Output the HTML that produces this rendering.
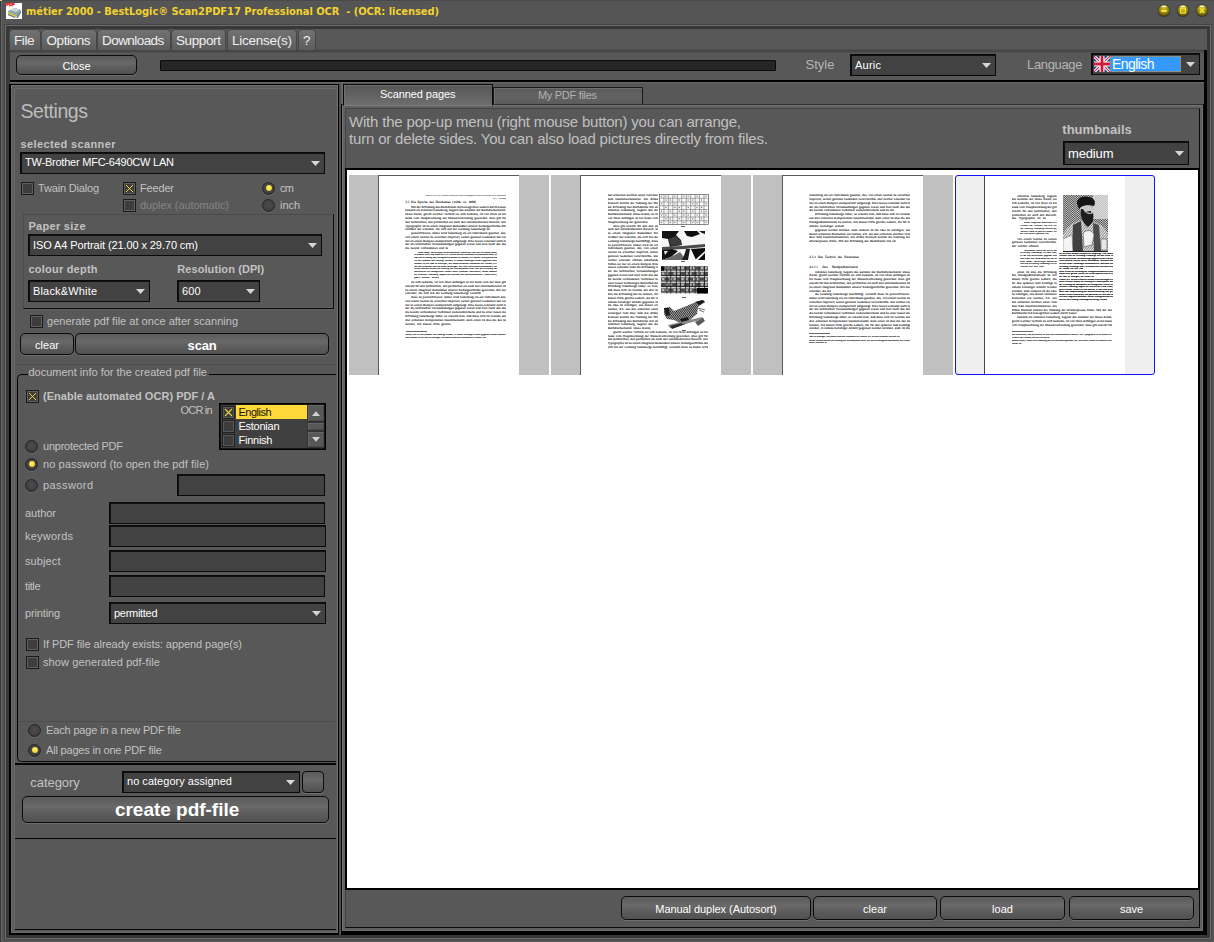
<!DOCTYPE html>
<html lang="en"><head><meta charset="utf-8"><title>métier 2000 - BestLogic Scan2PDF17 Professional OCR</title>
<style>
html,body{margin:0;padding:0;background:#555555;}
body{width:1214px;height:942px;overflow:hidden;font-family:"Liberation Sans",sans-serif;}
#win{position:relative;width:1214px;height:942px;overflow:hidden;background:#555555;}
#win div,#win span.t,#win svg{position:absolute;box-sizing:border-box;}
span.t{white-space:nowrap;line-height:normal;}
.pg{overflow:hidden;text-rendering:geometricPrecision;-webkit-text-stroke:0.085px currentColor;}
.pg div{overflow:hidden;}
.btn{border:1px solid #0c0c0c;border-radius:5px;background:linear-gradient(#5b5b5b 0%,#696969 40%,#5f5f5f 60%,#505050 100%);box-shadow:0 1px 0 #6e6e6e;}
.inp{background:#424242;border:1px solid #0a0a0a;box-shadow:inset 1px 1px 0 #101010;}
.cb{width:13px;height:13px;background:#3d3d3d;border:1px solid #1a1a1a;box-shadow:inset 0 0 0 1px #606060;}
.rb{width:13px;height:13px;border-radius:50%;background:radial-gradient(circle at 50% 45%,#4c4c4c 0%,#424242 55%,#2c2c2c 100%);border:1px solid #262626;box-shadow:0 1px 0 #6a6a6a;}
.mtab{top:30px;height:20px;border-radius:4px 4px 0 0;background:linear-gradient(#727272,#5c5c5c);box-shadow:0 0 0 1px #464646;}

</style></head>
<body>
<div id="win">
<div style="left:0px;top:0px;width:1px;height:942px;background:#3a3a3a;"></div>
<div style="left:1px;top:0px;width:1px;height:942px;background:#666666;"></div>
<div style="left:0px;top:0px;width:1214px;height:1px;background:#4a4a4a;"></div>
<div style="left:0px;top:0px;width:2px;height:1px;background:#e8c8a8;"></div>
<svg style="left:6px;top:3px" width="16" height="16" viewBox="0 0 16 16">
<rect width="16" height="16" fill="#ffffff"/>
<text x="0.3" y="3.4" font-family="Liberation Sans, sans-serif" font-weight="bold" font-size="4.2" fill="#f01010" stroke="#f01010" stroke-width="0.35">PDF</text>
<polygon points="2,8 9,5 15,7 15,9 12,15 8,14 2,11" fill="#8fa7a8"/>
<polygon points="4,7 9,5 14,7 10,9" fill="#c5d6d8"/>
<polygon points="2,9 11,13 11,14.5 2,10.5" fill="#d9cf3a"/>
<polygon points="2,11 9,14.2 9,15 2,12" fill="#3e5a58"/>
<polygon points="11,13 15,8 15,9.5 11.5,15" fill="#5f7f80"/>
</svg>
<span class="t" id="t1" style="left:26px;top:4.59px;font-size:11px;color:#f2d22e;font-weight:bold;font-family:'DejaVu Sans Condensed','DejaVu Sans',sans-serif;letter-spacing:-0.035px;white-space:pre;">métier 2000 - BestLogic® Scan2PDF17 Professional OCR  - (OCR: licensed)</span>
<svg style="left:1156.5px;top:3px" width="14" height="15" viewBox="0 0 14 15">
<defs><radialGradient id="g1163.5" cx="50%" cy="35%" r="65%"><stop offset="0" stop-color="#cdbb24"/><stop offset="0.55" stop-color="#9c8c12"/><stop offset="1" stop-color="#4e4506"/></radialGradient></defs>
<circle cx="7" cy="7.7" r="6.4" fill="#3a3a36"/>
<circle cx="7" cy="7.5" r="5.6" fill="url(#g1163.5)"/>
<ellipse cx="7" cy="3.4" rx="2.6" ry="0.9" fill="#fffbe0" opacity="0.95"/>
<rect x="3.9" y="6.9" width="6.2" height="1.9" rx="0.8" fill="#f8e53c"/></svg>
<svg style="left:1175.5px;top:3px" width="14" height="15" viewBox="0 0 14 15">
<defs><radialGradient id="g1182.5" cx="50%" cy="35%" r="65%"><stop offset="0" stop-color="#cdbb24"/><stop offset="0.55" stop-color="#9c8c12"/><stop offset="1" stop-color="#4e4506"/></radialGradient></defs>
<circle cx="7" cy="7.7" r="6.4" fill="#3a3a36"/>
<circle cx="7" cy="7.5" r="5.6" fill="url(#g1182.5)"/>
<ellipse cx="7" cy="3.4" rx="2.6" ry="0.9" fill="#fffbe0" opacity="0.95"/>
<rect x="4.6" y="5.2" width="4.8" height="4.8" fill="none" stroke="#f6e23a" stroke-width="1.2"/><rect x="6.5" y="7.1" width="1" height="1" fill="#f6e23a"/></svg>
<svg style="left:1194.5px;top:3px" width="14" height="15" viewBox="0 0 14 15">
<defs><radialGradient id="g1201.5" cx="50%" cy="35%" r="65%"><stop offset="0" stop-color="#cdbb24"/><stop offset="0.55" stop-color="#9c8c12"/><stop offset="1" stop-color="#4e4506"/></radialGradient></defs>
<circle cx="7" cy="7.7" r="6.4" fill="#3a3a36"/>
<circle cx="7" cy="7.5" r="5.6" fill="url(#g1201.5)"/>
<ellipse cx="7" cy="3.4" rx="2.6" ry="0.9" fill="#fffbe0" opacity="0.95"/>
<path d="M4.8 5.2 L9.2 10 M9.2 5.2 L4.8 10" stroke="#f6e23a" stroke-width="1.5" fill="none"/></svg>
<div style="left:4px;top:24px;width:1207px;height:915px;background:#444444;"></div>
<div style="left:5px;top:25px;width:1206px;height:914px;background:#6c6c6c;"></div>
<div style="left:6px;top:26px;width:1204px;height:912px;background:#383838;"></div>
<div style="left:1211px;top:24px;width:1px;height:916px;background:#494949;"></div>
<div style="left:4px;top:939px;width:1208px;height:1px;background:#494949;"></div>
<div style="left:10px;top:30px;width:1197px;height:905px;background:#000000;"></div>
<div style="left:10px;top:29px;width:1197px;height:21px;background:#585858;"></div>
<div style="left:10px;top:50px;width:1194px;height:30px;background:#585858;"></div>
<div style="left:10px;top:49px;width:1194px;height:1px;background:#4e4e4e;"></div>
<div style="left:10px;top:50px;width:1194px;height:2px;background:#464646;"></div>
<div style="left:10px;top:52px;width:1194px;height:1px;background:#505050;"></div>
<div style="left:10px;top:82px;width:1194px;height:849px;background:#565656;"></div>
<div style="left:10px;top:82px;width:1194px;height:1px;background:#686868;"></div>
<div style="left:10px;top:83px;width:1194px;height:1px;background:#5c5c5c;"></div>
<div class="mtab" style="left:10px;top:30px;width:30px;height:20px;"></div>
<span class="t" id="t2" style="left:14px;top:33.18px;font-size:13.5px;color:#f0f0f0;letter-spacing:-0.389px;">File</span>
<div class="mtab" style="left:42px;top:30px;width:54px;height:20px;"></div>
<span class="t" id="t3" style="left:46.5px;top:33.18px;font-size:13.5px;color:#f0f0f0;letter-spacing:-0.422px;">Options</span>
<div class="mtab" style="left:98px;top:30px;width:72px;height:20px;"></div>
<span class="t" id="t4" style="left:102px;top:33.18px;font-size:13.5px;color:#f0f0f0;letter-spacing:-0.562px;">Downloads</span>
<div class="mtab" style="left:172px;top:30px;width:53px;height:20px;"></div>
<span class="t" id="t5" style="left:176px;top:33.18px;font-size:13.5px;color:#f0f0f0;letter-spacing:-0.383px;">Support</span>
<div class="mtab" style="left:228px;top:30px;width:68px;height:20px;"></div>
<span class="t" id="t6" style="left:232px;top:33.18px;font-size:13.5px;color:#f0f0f0;letter-spacing:-0.253px;">License(s)</span>
<div class="mtab" style="left:299px;top:30px;width:16px;height:20px;"></div>
<span class="t" id="t7" style="left:303px;top:33.18px;font-size:13.5px;color:#f0f0f0;letter-spacing:0.000px;">?</span>
<div class="btn" style="left:16px;top:55px;width:121px;height:20px;border-radius:5px;"></div>
<span class="t" id="t8" style="left:16px;top:60.25px;font-size:11px;color:#ffffff;width:121px;text-align:center;">Close</span>
<div style="left:160px;top:60px;width:616px;height:11px;background:#262626;border:1px solid #0a0a0a;border-radius:1px;"></div>
<span class="t" id="t9" style="left:805.5px;top:57.23px;font-size:13px;color:#b4b4b4;letter-spacing:0.023px;">Style</span>
<div class="inp" style="left:850px;top:54px;width:146px;height:22px;"></div>
<span class="t" id="t10" style="left:855px;top:59.05px;font-size:11px;color:#ffffff;letter-spacing:0.234px;">Auric</span>
<svg style="left:982px;top:63px" width="9" height="5" viewBox="0 0 9 5"><polygon points="0,0 9,0 4.5,5" fill="#d6d6d6"/></svg>
<span class="t" id="t11" style="left:1027px;top:57.03px;font-size:13px;color:#b4b4b4;letter-spacing:-0.335px;">Language</span>
<div class="inp" style="left:1091px;top:53px;width:109px;height:22px;"></div>
<svg style="left:1094px;top:56px" width="16" height="16" viewBox="0 0 16 16">
<rect width="16" height="16" fill="#1f3f7a"/>
<path d="M0 0 L16 16 M16 0 L0 16" stroke="#ffffff" stroke-width="3.2"/>
<path d="M0 0 L16 16 M16 0 L0 16" stroke="#cf1b3a" stroke-width="1.1"/>
<path d="M8 0 V16 M0 8 H16" stroke="#ffffff" stroke-width="5"/>
<path d="M8 0 V16 M0 8 H16" stroke="#cf1b3a" stroke-width="2.8"/>
</svg>
<div style="left:1110px;top:56px;width:71px;height:16px;background:#3399ff;outline:1px dotted #e08a1a;outline-offset:-1px;"></div>
<span class="t" id="t12" style="left:1112px;top:55.93px;font-size:14px;color:#ffffff;letter-spacing:-0.570px;">English</span>
<svg style="left:1185.5px;top:61.5px" width="9" height="5" viewBox="0 0 9 5"><polygon points="0,0 9,0 4.5,5" fill="#d6d6d6"/></svg>
<div style="left:9px;top:84px;width:331px;height:851px;background:#000000;"></div>
<div style="left:11px;top:85px;width:327px;height:848px;background:#5c5c5c;border-top:1px solid #707070;border-left:1px solid #707070;border-right:1px solid #707070;border-bottom:1px solid #6a6a6a;"></div>
<div style="left:339px;top:84px;width:2px;height:851px;background:#4e4e4e;"></div>
<div style="left:14px;top:88px;width:322px;height:842px;background:#585858;border-top:1px solid #6c6c6c;border-left:1px solid #6a6a6a;border-bottom:1px solid #050505;"></div>
<span class="t" id="t13" style="left:20.5px;top:99.55px;font-size:19.5px;color:#bcbcbc;letter-spacing:-0.424px;">Settings</span>
<span class="t" id="t14" style="left:20.5px;top:138.04px;font-size:11px;color:#c2c2c2;font-weight:bold;letter-spacing:0.381px;">selected scanner</span>
<div class="inp" style="left:20px;top:152px;width:305px;height:22px;"></div>
<span class="t" id="t15" style="left:25px;top:156.04px;font-size:11px;color:#ffffff;letter-spacing:-0.227px;">TW-Brother MFC-6490CW LAN</span>
<svg style="left:311px;top:161px" width="9" height="5" viewBox="0 0 9 5"><polygon points="0,0 9,0 4.5,5" fill="#d6d6d6"/></svg>
<div class="cb" style="left:21px;top:182px;width:13px;height:13px;"></div>
<span class="t" id="t16" style="left:38px;top:182.34px;font-size:11px;color:#c2c2c2;letter-spacing:-0.180px;">Twain Dialog</span>
<div class="cb" style="left:123px;top:182px;width:13px;height:13px;"></div>
<svg style="left:123px;top:182px" width="13" height="13" viewBox="0 0 13 13"><path d="M3 3 L10 10 M10 3 L3 10" stroke="#ecd63e" stroke-width="1.0" fill="none"/></svg>
<span class="t" id="t17" style="left:140px;top:182.34px;font-size:11px;color:#c2c2c2;letter-spacing:-0.172px;">Feeder</span>
<div class="cb" style="left:123px;top:199px;width:13px;height:13px;"></div>
<span class="t" id="t18" style="left:140px;top:199.34px;font-size:11px;color:#848484;letter-spacing:-0.088px;">duplex (automatic)</span>
<div class="rb" style="left:262px;top:182px;width:13px;height:13px;"></div>
<div style="left:265.5px;top:185px;width:6px;height:6px;border-radius:50%;background:radial-gradient(circle at 45% 40%,#fff27a 0%,#f4d93a 55%,#c9ab1e 100%);"></div>
<span class="t" id="t19" style="left:280px;top:182.34px;font-size:11px;color:#c2c2c2;letter-spacing:-0.672px;">cm</span>
<div class="rb" style="left:262px;top:199px;width:13px;height:13px;"></div>
<span class="t" id="t20" style="left:280px;top:199.34px;font-size:11px;color:#c2c2c2;letter-spacing:-0.062px;">inch</span>
<div style="left:23px;top:214px;width:311px;height:95px;border-top:1px solid #4b4b4b;border-left:1px solid #4b4b4b;border-right:1px solid #060606;border-bottom:1px solid #060606;box-shadow:1px 1px 0 #616161, inset -1px -1px 0 #5f5f5f;"></div>
<span class="t" id="t21" style="left:28.5px;top:219.84px;font-size:11px;color:#c2c2c2;font-weight:bold;letter-spacing:0.286px;">Paper size</span>
<div class="inp" style="left:28px;top:234px;width:294px;height:22px;"></div>
<span class="t" id="t22" style="left:33px;top:239.04px;font-size:11px;color:#ffffff;letter-spacing:-0.095px;">ISO A4 Portrait (21.00 x 29.70 cm)</span>
<svg style="left:308px;top:243px" width="9" height="5" viewBox="0 0 9 5"><polygon points="0,0 9,0 4.5,5" fill="#d6d6d6"/></svg>
<span class="t" id="t23" style="left:28.5px;top:262.55px;font-size:11px;color:#c2c2c2;font-weight:bold;letter-spacing:0.217px;">colour depth</span>
<span class="t" id="t24" style="left:177.2px;top:262.55px;font-size:11px;color:#c2c2c2;font-weight:bold;letter-spacing:0.096px;">Resolution (DPI)</span>
<div class="inp" style="left:28px;top:280px;width:122px;height:22px;"></div>
<span class="t" id="t25" style="left:33px;top:285.05px;font-size:11px;color:#ffffff;letter-spacing:0.164px;">Black&amp;White</span>
<svg style="left:136px;top:289px" width="9" height="5" viewBox="0 0 9 5"><polygon points="0,0 9,0 4.5,5" fill="#d6d6d6"/></svg>
<div class="inp" style="left:177px;top:280px;width:83px;height:22px;"></div>
<span class="t" id="t26" style="left:182px;top:285.05px;font-size:11px;color:#ffffff;letter-spacing:0.070px;">600</span>
<svg style="left:246px;top:289px" width="9" height="5" viewBox="0 0 9 5"><polygon points="0,0 9,0 4.5,5" fill="#d6d6d6"/></svg>
<div class="cb" style="left:30px;top:315px;width:13px;height:13px;"></div>
<span class="t" id="t27" style="left:47px;top:314.85px;font-size:11px;color:#c2c2c2;letter-spacing:0.021px;">generate pdf file at once after scanning</span>
<div class="btn" style="left:20px;top:333px;width:54px;height:22px;border-radius:5px;"></div>
<span class="t" id="t28" style="left:20px;top:338.55px;font-size:11px;color:#ffffff;width:54px;text-align:center;">clear</span>
<div class="btn" style="left:75px;top:333px;width:254px;height:22px;border-radius:5px;"></div>
<span class="t" id="t29" style="left:75px;top:337.74px;font-size:13px;color:#ffffff;font-weight:bold;letter-spacing:-0.214px;width:254px;text-align:center;">scan</span>
<div style="left:15px;top:364px;width:321px;height:1px;background:#4c4c4c;"></div>
<div style="left:17px;top:374px;width:319px;height:388px;border:1px solid #050505;border-right:none;border-radius:5px 0 0 5px;"></div>
<div style="left:27.5px;top:368px;width:181px;height:12px;background:#585858;"></div>
<span class="t" id="t30" style="left:28.5px;top:366.35px;font-size:11px;color:#c2c2c2;letter-spacing:-0.002px;">document info for the created pdf file</span>
<div class="cb" style="left:26px;top:390px;width:13px;height:13px;"></div>
<svg style="left:26px;top:390px" width="13" height="13" viewBox="0 0 13 13"><path d="M3 3 L10 10 M10 3 L3 10" stroke="#ecd63e" stroke-width="1.0" fill="none"/></svg>
<span class="t" id="t31" style="left:43px;top:389.85px;font-size:11px;color:#c2c2c2;font-weight:bold;letter-spacing:0.023px;">(Enable automated OCR) PDF / A</span>
<span class="t" id="t32" style="left:180.5px;top:403.85px;font-size:11px;color:#c2c2c2;letter-spacing:-0.812px;">OCR in</span>
<div style="left:219px;top:403px;width:107px;height:47px;background:#404040;border:1px solid #000000;box-shadow:inset 0 0 0 1px #161616;"></div>
<div style="left:236px;top:405px;width:71px;height:14px;background:#ffd83a;"></div>
<div style="left:222px;top:406px;width:13px;height:13px;background:#3c3c3c;border:1px solid #202020;box-shadow:inset 0 0 0 1px #585858;"></div>
<svg style="left:222px;top:406px" width="13" height="13" viewBox="0 0 13 13"><path d="M3 3 L10 10 M10 3 L3 10" stroke="#e9d23c" stroke-width="1.1" fill="none"/></svg>
<span class="t" id="t33" style="left:238.5px;top:406.35px;font-size:11px;color:#141400;letter-spacing:-0.513px;">English</span>
<div style="left:222px;top:420px;width:13px;height:13px;background:#3c3c3c;border:1px solid #202020;box-shadow:inset 0 0 0 1px #585858;"></div>
<span class="t" id="t34" style="left:238.5px;top:420.35px;font-size:11px;color:#ffffff;letter-spacing:-0.259px;">Estonian</span>
<div style="left:222px;top:434px;width:13px;height:13px;background:#3c3c3c;border:1px solid #202020;box-shadow:inset 0 0 0 1px #585858;"></div>
<span class="t" id="t35" style="left:238.5px;top:434.35px;font-size:11px;color:#ffffff;letter-spacing:-0.245px;">Finnish</span>
<div style="left:307px;top:405px;width:17px;height:43px;background:#343434;"></div>
<div style="left:307.5px;top:405px;width:16px;height:16px;background:#585858;border:1px solid #676767;border-right-color:#4a4a4a;border-bottom-color:#4a4a4a;"></div>
<div style="left:307.5px;top:432px;width:16px;height:15px;background:#585858;border:1px solid #676767;border-right-color:#4a4a4a;border-bottom-color:#4a4a4a;"></div>
<div style="left:307.5px;top:423px;width:16px;height:7px;background:#585858;border:1px solid #676767;border-right-color:#4a4a4a;border-bottom-color:#4a4a4a;"></div>
<svg style="left:311.5px;top:411px" width="8" height="5" viewBox="0 0 8 5"><polygon points="0,5 8,5 4,0.3" fill="#d2d2d2"/></svg>
<svg style="left:311.5px;top:437px" width="8" height="5" viewBox="0 0 8 5"><polygon points="0,0 8,0 4,4.7" fill="#d2d2d2"/></svg>
<div class="rb" style="left:25px;top:440px;width:13px;height:13px;"></div>
<span class="t" id="t36" style="left:43px;top:440.25px;font-size:11px;color:#c2c2c2;letter-spacing:-0.225px;">unprotected PDF</span>
<div class="rb" style="left:25px;top:458px;width:13px;height:13px;"></div>
<div style="left:28.5px;top:461px;width:6px;height:6px;border-radius:50%;background:radial-gradient(circle at 45% 40%,#fff27a 0%,#f4d93a 55%,#c9ab1e 100%);"></div>
<span class="t" id="t37" style="left:43px;top:458.25px;font-size:11px;color:#c2c2c2;letter-spacing:0.083px;">no password (to open the pdf file)</span>
<div class="rb" style="left:25px;top:479px;width:13px;height:13px;"></div>
<span class="t" id="t38" style="left:43px;top:479.25px;font-size:11px;color:#c2c2c2;letter-spacing:0.417px;">password</span>
<div class="inp" style="left:177px;top:474px;width:148px;height:22px;"></div>
<span class="t" id="t39" style="left:25px;top:507.05px;font-size:11px;color:#c2c2c2;letter-spacing:-0.041px;">author</span>
<div class="inp" style="left:109px;top:502px;width:216px;height:22px;"></div>
<span class="t" id="t40" style="left:25px;top:530.34px;font-size:11px;color:#c2c2c2;letter-spacing:0.219px;">keywords</span>
<div class="inp" style="left:109px;top:525px;width:217px;height:22px;"></div>
<span class="t" id="t41" style="left:25px;top:555.34px;font-size:11px;color:#c2c2c2;letter-spacing:0.107px;">subject</span>
<div class="inp" style="left:109px;top:550px;width:217px;height:22px;"></div>
<span class="t" id="t42" style="left:25px;top:580.34px;font-size:11px;color:#c2c2c2;letter-spacing:-0.406px;">title</span>
<div class="inp" style="left:109px;top:575px;width:216px;height:22px;"></div>
<span class="t" id="t43" style="left:25px;top:607.04px;font-size:11px;color:#c2c2c2;letter-spacing:-0.154px;">printing</span>
<div class="inp" style="left:109px;top:602px;width:217px;height:22px;"></div>
<span class="t" id="t44" style="left:114px;top:607.04px;font-size:11px;color:#ffffff;letter-spacing:-0.295px;">permitted</span>
<svg style="left:312px;top:611px" width="9" height="5" viewBox="0 0 9 5"><polygon points="0,0 9,0 4.5,5" fill="#d6d6d6"/></svg>
<div class="cb" style="left:26px;top:638px;width:13px;height:13px;"></div>
<span class="t" id="t45" style="left:43px;top:638.04px;font-size:11px;color:#c2c2c2;letter-spacing:-0.067px;">If PDF file already exists: append page(s)</span>
<div class="cb" style="left:26px;top:656px;width:13px;height:13px;"></div>
<span class="t" id="t46" style="left:43px;top:656.04px;font-size:11px;color:#c2c2c2;letter-spacing:0.120px;">show generated pdf-file</span>
<div style="left:18px;top:721px;width:317px;height:1px;background:#4c4c4c;"></div>
<div class="rb" style="left:28px;top:724px;width:13px;height:13px;"></div>
<span class="t" id="t47" style="left:46px;top:724.25px;font-size:11px;color:#c2c2c2;letter-spacing:-0.147px;">Each page in a new PDF file</span>
<div class="rb" style="left:28px;top:744px;width:13px;height:13px;"></div>
<div style="left:31.5px;top:747px;width:6px;height:6px;border-radius:50%;background:radial-gradient(circle at 45% 40%,#fff27a 0%,#f4d93a 55%,#c9ab1e 100%);"></div>
<span class="t" id="t48" style="left:46px;top:744.25px;font-size:11px;color:#c2c2c2;letter-spacing:-0.186px;">All pages in one PDF file</span>
<div style="left:15px;top:763px;width:321px;height:2px;background:#050505;"></div>
<span class="t" id="t49" style="left:30.3px;top:775.24px;font-size:13px;color:#c2c2c2;letter-spacing:-0.054px;">category</span>
<div class="inp" style="left:122px;top:771px;width:178px;height:22px;"></div>
<span class="t" id="t50" style="left:127px;top:775.04px;font-size:11px;color:#ffffff;letter-spacing:0.022px;">no category assigned</span>
<svg style="left:286px;top:780px" width="9" height="5" viewBox="0 0 9 5"><polygon points="0,0 9,0 4.5,5" fill="#d6d6d6"/></svg>
<div class="btn" style="left:302px;top:771px;width:22px;height:22px;border-radius:4px;"></div>
<div class="btn" style="left:22px;top:796px;width:307px;height:27px;border-radius:5px;"></div>
<span class="t" id="t51" style="left:23.6px;top:799.30px;font-size:19px;color:#ffffff;font-weight:bold;letter-spacing:-0.014px;width:307px;text-align:center;">create pdf-file</span>
<div style="left:15px;top:838px;width:321px;height:1px;background:#050505;"></div>
<div style="left:341px;top:83px;width:863px;height:22px;background:#585858;"></div>
<div style="left:341px;top:83px;width:2px;height:22px;background:#686868;"></div>
<div style="left:341px;top:104px;width:863px;height:1px;background:#303030;"></div>
<div style="left:341px;top:104px;width:1px;height:829px;background:#050505;"></div>
<div style="left:342px;top:105px;width:861px;height:826px;background:#606060;border-top:1px solid #747474;border-left:1px solid #747474;border-right:1px solid #727272;border-bottom:1px solid #6c6c6c;"></div>
<div style="left:1203px;top:104px;width:1px;height:829px;background:#050505;"></div>
<div style="left:345px;top:108px;width:855px;height:820px;background:#585858;border:1px solid #434343;border-right-color:#0a0a0a;border-bottom-color:#0a0a0a;"></div>
<div style="left:493px;top:87px;width:150px;height:18px;background:linear-gradient(#5a5a5a,#626262 60%,#5c5c5c);border:1px solid #1a1a1a;border-bottom-color:#303030;box-shadow:inset 1px 1px 0 #6e6e6e;"></div>
<span class="t" id="t52" style="left:538px;top:88.75px;font-size:11px;color:#b0b0b0;letter-spacing:-0.304px;">My PDF files</span>
<div style="left:343px;top:84px;width:150px;height:22px;background:linear-gradient(#565656,#6e6e6e);border:1px solid #0a0a0a;border-bottom:1px solid #7c7c7c;box-shadow:inset 1px 1px 0 #6e6e6e;"></div>
<span class="t" id="t53" style="left:380px;top:88.45px;font-size:11px;color:#ffffff;letter-spacing:-0.079px;">Scanned pages</span>
<span class="t" id="t54" style="left:349px;top:112.92px;font-size:15px;color:#c0c0c0;letter-spacing:-0.188px;">With the pop-up menu (right mouse button) you can arrange,</span>
<span class="t" id="t55" style="left:349px;top:129.62px;font-size:15px;color:#c0c0c0;letter-spacing:-0.177px;">turn or delete sides. You can also load pictures directly from files.</span>
<span class="t" id="t56" style="left:1062.3px;top:122.04px;font-size:13px;color:#c2c2c2;font-weight:bold;letter-spacing:0.017px;">thumbnails</span>
<div class="inp" style="left:1063px;top:141px;width:126px;height:24px;"></div>
<span class="t" id="t57" style="left:1068px;top:146.24px;font-size:13px;color:#ffffff;letter-spacing:-0.150px;">medium</span>
<svg style="left:1175px;top:151px" width="9" height="5" viewBox="0 0 9 5"><polygon points="0,0 9,0 4.5,5" fill="#d6d6d6"/></svg>
<div style="left:345px;top:168px;width:855px;height:722px;background:#ffffff;border:2px solid #000000;"></div>
<div style="left:349px;top:175px;width:200px;height:200px;background:#c0c0c0;"></div>
<div style="left:378px;top:175px;width:141px;height:200px;background:#ffffff;border-left:1px solid #5a5a5a;border-top:1px solid #5a5a5a;"></div>
<div style="left:551px;top:175px;width:200px;height:200px;background:#c0c0c0;"></div>
<div style="left:580px;top:175px;width:141px;height:200px;background:#ffffff;border-left:1px solid #5a5a5a;border-top:1px solid #5a5a5a;"></div>
<div style="left:753px;top:175px;width:200px;height:200px;background:#c0c0c0;"></div>
<div style="left:782px;top:175px;width:141px;height:200px;background:#ffffff;border-left:1px solid #5a5a5a;border-top:1px solid #5a5a5a;"></div>
<div style="left:955px;top:175px;width:200px;height:200px;background:#efefef;border:1px solid #1414f4;border-radius:3px;"></div>
<div style="left:984px;top:176px;width:141px;height:198px;background:#ffffff;border-left:1px solid #4a4a4a;"></div>
<div class="pg" style="left:426px;top:194.52px;width:80px;height:2.55px;font-family:'Liberation Serif', serif;font-size:1.75px;line-height:2.55px;color:#222;white-space:nowrap;text-align:left;text-align-last:justify;">Nach der im 15. Jh. erfundenen Technik des Drucks mit beweglichen Lettern bis zur Mitte des 19. Jahrhunderts</div>
<div class="pg" style="left:493px;top:198.12px;width:13px;height:2.55px;font-family:'Liberation Serif', serif;font-size:1.75px;line-height:2.55px;color:#222;white-space:nowrap;text-align:left;text-align-last:justify;">3.2.1 Gutenberg</div>
<div class="pg" style="left:405.2px;top:199.72px;width:71px;height:4.15px;font-family:'Liberation Serif', serif;font-size:3.35px;line-height:4.15px;color:#0c0c0c;white-space:nowrap;text-align:left;text-align-last:justify;">3.2 Die Epoche des Handsatzes (1440- ca. 1900)</div>
<div class="pg" style="left:405.2px;top:205.6px;width:100.8px;height:27.03px;font-family:'Liberation Serif', serif;font-size:3.25px;line-height:3.79px;color:#0c0c0c;white-space:nowrap;"><div style="left:5.7px;top:0.00px;width:95.1px;height:3.79px;text-align-last:justify;">Mit der Erfindung des Buchdrucks mit beweglichen Lettern durch besser</div><div style="left:0.0px;top:3.79px;width:100.8px;height:3.79px;text-align-last:justify;">bekannt als Johannes Gutenberg, begann das Zeitalter der Buchdruckerkunst.</div><div style="left:0.0px;top:7.58px;width:100.8px;height:3.79px;text-align-last:justify;">Diese Kunst, gleich welcher Technik sie sich bediente, ist von ihren an bis</div><div style="left:0.0px;top:11.37px;width:100.8px;height:3.79px;text-align-last:justify;">heute vom Hauptwerkzeug der Massenverbreitung geworden. Dies gilt für</div><div style="left:0.0px;top:15.16px;width:100.8px;height:3.79px;text-align-last:justify;">den technischen, den politischen als auch den sozialkulturellen Bereich. Die</div><div style="left:0.0px;top:18.95px;width:100.8px;height:3.79px;text-align-last:justify;">Typographie ist zu einem integralen Bestandteil unserer Kulturgeschichte Ein</div><div style="left:0.0px;top:22.74px;width:84.7px;height:3.79px;text-align-last:justify;">Großteil der Literatur, die sich mit der Leistung Gutenbergs zu</div></div>
<div class="pg" style="left:405.2px;top:232.1px;width:100.8px;height:19.45px;font-family:'Liberation Serif', serif;font-size:3.25px;line-height:3.79px;color:#0c0c0c;white-space:nowrap;"><div style="left:5.7px;top:0.00px;width:95.1px;height:3.79px;text-align-last:justify;">personifizieren. Dabei wird Gutenberg als ein Individuum gesehen, das,</div><div style="left:0.0px;top:3.79px;width:100.8px;height:3.79px;text-align-last:justify;">von einem Genius zu erwachen inspiriert, seinen genialen Gedanken Der sei</div><div style="left:0.0px;top:7.58px;width:100.8px;height:3.79px;text-align-last:justify;">nur an einem Beispiel exemplarisch aufgezeigt. Eine neuere Literatur sieht in</div><div style="left:0.0px;top:11.37px;width:100.8px;height:3.79px;text-align-last:justify;">der die technischen Voraussetzungen gegeben waren und man mehr das das</div><div style="left:0.0px;top:15.16px;width:43.3px;height:3.79px;text-align-last:justify;">die bereits vorhandenen und zu</div></div>
<div class="pg" style="left:414.2px;top:251.71px;width:82.8px;height:28.3px;font-family:'Liberation Serif', serif;font-size:2.45px;line-height:2.78px;color:#0c0c0c;white-space:nowrap;-webkit-text-stroke:0.12px #0c0c0c;"><div style="left:4.0px;top:0.00px;width:78.8px;height:2.78px;text-align-last:justify;">einer neuen Technologie zusammenstellte. Betrachtet man die Erfindung näher,</div><div style="left:0.0px;top:2.78px;width:82.8px;height:2.78px;text-align-last:justify;">so erkennt man, daß diese sich im Grunde aus drei einzelnen Komponenten Zum ist</div><div style="left:0.0px;top:5.56px;width:82.8px;height:2.78px;text-align-last:justify;">dies die Erfindung des Handgießinstruments zu nennen, mit dessen Hilfe gleiche die</div><div style="left:0.0px;top:8.34px;width:82.8px;height:2.78px;text-align-last:justify;">für den späteren Satz benötigt wurden, in nahezu beliebiger Anzahl gegossen Zum</div><div style="left:0.0px;top:11.12px;width:82.8px;height:2.78px;text-align-last:justify;">anderen ist die Idee zu würdigen, aus diesen einzelnen Elementen ein Ganzes, d.h.</div><div style="left:0.0px;top:13.90px;width:82.8px;height:2.78px;text-align-last:justify;">aus den einzelnen Zeichen einen beliebigen Text über Satz zusammenzustellen. Als</div><div style="left:0.0px;top:16.68px;width:82.8px;height:2.78px;text-align-last:justify;">drittes Element kommt die Nutzung der Druckerpresse hinzu. Mit der Erfindung des</div><div style="left:0.0px;top:19.46px;width:82.8px;height:2.78px;text-align-last:justify;">Buchdrucks mit beweglichen Lettern durch Johannes Gensfleisch, besser bekannt</div><div style="left:0.0px;top:22.24px;width:82.8px;height:2.78px;text-align-last:justify;">als Johannes Gutenberg, begann das Zeitalter der Buchdruckerkunst. Diese Kunst,</div><div style="left:0.0px;top:25.02px;width:24.8px;height:2.78px;text-align-last:justify;">gleich welcher Technik</div></div>
<div class="pg" style="left:405.2px;top:281.11px;width:100.8px;height:15.66px;font-family:'Liberation Serif', serif;font-size:3.25px;line-height:3.79px;color:#0c0c0c;white-space:nowrap;"><div style="left:5.7px;top:0.00px;width:95.1px;height:3.79px;text-align-last:justify;">sie sich bediente, ist von ihren Anfängen an bis heute vom der Dies gilt</div><div style="left:0.0px;top:3.79px;width:100.8px;height:3.79px;text-align-last:justify;">sowohl für den technischen, den politischen als auch den sozialkulturellen ist</div><div style="left:0.0px;top:7.58px;width:100.8px;height:3.79px;text-align-last:justify;">zu einem integralen Bestandteil unserer Kulturgeschichte geworden. Ein der</div><div style="left:0.0px;top:11.37px;width:75.6px;height:3.79px;text-align-last:justify;">Literatur, die sich mit der Leistung Gutenbergs versucht</div></div>
<div class="pg" style="left:405.2px;top:296.0px;width:100.8px;height:30.9px;font-family:'Liberation Serif', serif;font-size:3.25px;line-height:3.8px;color:#0c0c0c;white-space:nowrap;"><div style="left:5.7px;top:0.00px;width:95.1px;height:3.8px;text-align-last:justify;">diese zu personifizieren. Dabei wird Gutenberg als ein Individuum das,</div><div style="left:0.0px;top:3.80px;width:100.8px;height:3.8px;text-align-last:justify;">von einem Genius zu erwachen inspiriert, seinen genialen Gedanken Der sei</div><div style="left:0.0px;top:7.60px;width:100.8px;height:3.8px;text-align-last:justify;">nur an einem Beispiel exemplarisch aufgezeigt. Eine neuere Literatur sieht in</div><div style="left:0.0px;top:11.40px;width:100.8px;height:3.8px;text-align-last:justify;">der die technischen Voraussetzungen gegeben waren und man mehr das das</div><div style="left:0.0px;top:15.20px;width:100.8px;height:3.8px;text-align-last:justify;">die bereits vorhandenen Techniken weiterentwickelte und zu einer neuen die</div><div style="left:0.0px;top:19.00px;width:100.8px;height:3.8px;text-align-last:justify;">Erfindung Gutenbergs näher, so erkennt man, daß diese sich im Grunde aus</div><div style="left:0.0px;top:22.80px;width:100.8px;height:3.8px;text-align-last:justify;">drei einzelnen Komponenten zusammensetzt. Zum einen ist dies die des zu</div><div style="left:0.0px;top:26.60px;width:45.4px;height:3.8px;text-align-last:justify;">nennen, mit dessen Hilfe gleiche</div></div>
<div style="left:405.6px;top:331px;width:21px;height:1px;background:#6a6a6a;"></div>
<div class="pg" style="left:405.2px;top:334.05px;width:100.8px;height:5.9px;font-family:'Liberation Serif', serif;font-size:2.3px;line-height:2.7px;color:#101010;white-space:nowrap;-webkit-text-stroke:0.12px #101010;"><div style="left:0.0px;top:0.00px;width:100.8px;height:2.7px;text-align-last:justify;">Lettern, die für den späteren Satz benötigt wurden, in nahezu beliebiger Anzahl gegossen werden konnten.</div><div style="left:0.0px;top:2.70px;width:80.6px;height:2.7px;text-align-last:justify;">Zum anderen ist die Idee zu würdigen, aus diesen einzelnen Elementen ein Ganzes, aus</div></div>
<div class="pg" style="left:607.5px;top:194.2px;width:50.8px;height:30.9px;font-family:'Liberation Serif', serif;font-size:3.25px;line-height:3.8px;color:#0c0c0c;white-space:nowrap;"><div style="left:0.0px;top:0.00px;width:50.8px;height:3.8px;text-align-last:justify;">den einzelnen Zeichen einen Text über</div><div style="left:0.0px;top:3.80px;width:50.8px;height:3.8px;text-align-last:justify;">Satz zusammenzustellen. Als drittes</div><div style="left:0.0px;top:7.60px;width:50.8px;height:3.8px;text-align-last:justify;">Element kommt die Nutzung der Mit</div><div style="left:0.0px;top:11.40px;width:50.8px;height:3.8px;text-align-last:justify;">der Erfindung des Buchdrucks mit als</div><div style="left:0.0px;top:15.20px;width:50.8px;height:3.8px;text-align-last:justify;">Johannes Gutenberg, begann das der</div><div style="left:0.0px;top:19.00px;width:50.8px;height:3.8px;text-align-last:justify;">Buchdruckerkunst. Diese Kunst, sie ist</div><div style="left:0.0px;top:22.80px;width:50.8px;height:3.8px;text-align-last:justify;">von ihren Anfängen an bis heute vom</div><div style="left:0.0px;top:26.60px;width:40.6px;height:3.8px;text-align-last:justify;">Hauptwerkzeug der geworden.</div></div>
<div class="pg" style="left:607.5px;top:224.6px;width:50.8px;height:106.9px;font-family:'Liberation Serif', serif;font-size:3.25px;line-height:3.8px;color:#0c0c0c;white-space:nowrap;"><div style="left:5.7px;top:0.00px;width:45.1px;height:3.8px;text-align-last:justify;">Dies gilt sowohl für den den als</div><div style="left:0.0px;top:3.80px;width:50.8px;height:3.8px;text-align-last:justify;">auch den sozialkulturellen Bereich. ist</div><div style="left:0.0px;top:7.60px;width:50.8px;height:3.8px;text-align-last:justify;">zu einem integralen Bestandteil Ein</div><div style="left:0.0px;top:11.40px;width:50.8px;height:3.8px;text-align-last:justify;">Großteil der Literatur, die sich mit der</div><div style="left:0.0px;top:15.20px;width:50.8px;height:3.8px;text-align-last:justify;">Leistung Gutenbergs beschäftigt, diese</div><div style="left:0.0px;top:19.00px;width:50.8px;height:3.8px;text-align-last:justify;">zu personifizieren. Dabei wird als ein</div><div style="left:0.0px;top:22.80px;width:50.8px;height:3.8px;text-align-last:justify;">Individuum gesehen, das, von einem</div><div style="left:0.0px;top:26.60px;width:50.8px;height:3.8px;text-align-last:justify;">Genius zu erwachen inspiriert, seinen</div><div style="left:0.0px;top:30.40px;width:50.8px;height:3.8px;text-align-last:justify;">genialen Gedanken verwirklichte. Der</div><div style="left:0.0px;top:34.20px;width:50.8px;height:3.8px;text-align-last:justify;">solcher Literatur oftmals anhaftende</div><div style="left:0.0px;top:38.00px;width:50.8px;height:3.8px;text-align-last:justify;">Pathos sei nur an einem Beispiel Eine</div><div style="left:0.0px;top:41.80px;width:50.8px;height:3.8px;text-align-last:justify;">neuere Literatur sieht die Erfindung in</div><div style="left:0.0px;top:45.60px;width:50.8px;height:3.8px;text-align-last:justify;">der die technischen Voraussetzungen</div><div style="left:0.0px;top:49.40px;width:50.8px;height:3.8px;text-align-last:justify;">gegeben waren und man mehr das das</div><div style="left:0.0px;top:53.20px;width:50.8px;height:3.8px;text-align-last:justify;">die bereits vorhandenen Techniken zu</div><div style="left:0.0px;top:57.00px;width:50.8px;height:3.8px;text-align-last:justify;">einer neuen Technologie Betrachtet die</div><div style="left:0.0px;top:60.80px;width:50.8px;height:3.8px;text-align-last:justify;">Erfindung Gutenbergs näher, so man,</div><div style="left:0.0px;top:64.60px;width:50.8px;height:3.8px;text-align-last:justify;">daß diese sich im Grunde aus drei ist</div><div style="left:0.0px;top:68.40px;width:50.8px;height:3.8px;text-align-last:justify;">dies die Erfindung des zu nennen, mit</div><div style="left:0.0px;top:72.20px;width:50.8px;height:3.8px;text-align-last:justify;">dessen Hilfe gleiche Lettern, die für in</div><div style="left:0.0px;top:76.00px;width:50.8px;height:3.8px;text-align-last:justify;">nahezu beliebiger Anzahl gegossen ist</div><div style="left:0.0px;top:79.80px;width:50.8px;height:3.8px;text-align-last:justify;">die Idee zu würdigen, aus diesen ein</div><div style="left:0.0px;top:83.60px;width:50.8px;height:3.8px;text-align-last:justify;">Ganzes, d.h. aus den einzelnen einen</div><div style="left:0.0px;top:87.40px;width:50.8px;height:3.8px;text-align-last:justify;">beliebigen Text über Satz Als drittes</div><div style="left:0.0px;top:91.20px;width:50.8px;height:3.8px;text-align-last:justify;">Element kommt die Nutzung der Mit</div><div style="left:0.0px;top:95.00px;width:50.8px;height:3.8px;text-align-last:justify;">der Erfindung des Buchdrucks mit als</div><div style="left:0.0px;top:98.80px;width:50.8px;height:3.8px;text-align-last:justify;">Johannes Gutenberg, begann das der</div><div style="left:0.0px;top:102.60px;width:43.2px;height:3.8px;text-align-last:justify;">Buchdruckerkunst. Diese Kunst,</div></div>
<div class="pg" style="left:607.5px;top:330.81px;width:100.4px;height:19.4px;font-family:'Liberation Serif', serif;font-size:3.25px;line-height:3.78px;color:#0c0c0c;white-space:nowrap;"><div style="left:5.7px;top:0.00px;width:94.7px;height:3.78px;text-align-last:justify;">gleich welcher Technik sie sich bediente, ist von ihren Anfängen an bis</div><div style="left:0.0px;top:3.78px;width:100.4px;height:3.78px;text-align-last:justify;">heute vom Hauptwerkzeug der Massenverbreitung geworden. Dies gilt für</div><div style="left:0.0px;top:7.56px;width:100.4px;height:3.78px;text-align-last:justify;">den technischen, den politischen als auch den sozialkulturellen Bereich. Die</div><div style="left:0.0px;top:11.34px;width:100.4px;height:3.78px;text-align-last:justify;">Typographie ist zu einem integralen Bestandteil unserer Kulturgeschichte die</div><div style="left:0.0px;top:15.12px;width:100.4px;height:3.78px;text-align-last:justify;">sich mit der Leistung Gutenbergs beschäftigt, versucht diese zu Dabei wird</div></div>
<svg style="left:659px;top:194px" width="50" height="31" viewBox="0 0 50 31"><rect x="0.5" y="0.5" width="49" height="30" fill="#fafafa" stroke="#3a3a3a" stroke-width="0.6"/><line x1="4.95" y1="0.5" x2="4.95" y2="30.5" stroke="#555" stroke-width="0.5"/><line x1="9.40" y1="0.5" x2="9.40" y2="30.5" stroke="#555" stroke-width="0.5"/><line x1="13.85" y1="0.5" x2="13.85" y2="30.5" stroke="#555" stroke-width="0.5"/><line x1="18.30" y1="0.5" x2="18.30" y2="30.5" stroke="#555" stroke-width="0.5"/><line x1="22.75" y1="0.5" x2="22.75" y2="30.5" stroke="#555" stroke-width="0.5"/><line x1="27.20" y1="0.5" x2="27.20" y2="30.5" stroke="#555" stroke-width="0.5"/><line x1="31.65" y1="0.5" x2="31.65" y2="30.5" stroke="#555" stroke-width="0.5"/><line x1="36.10" y1="0.5" x2="36.10" y2="30.5" stroke="#555" stroke-width="0.5"/><line x1="40.55" y1="0.5" x2="40.55" y2="30.5" stroke="#555" stroke-width="0.5"/><line x1="45.00" y1="0.5" x2="45.00" y2="30.5" stroke="#555" stroke-width="0.5"/><line x1="0.5" y1="4.25" x2="49.5" y2="4.25" stroke="#555" stroke-width="0.5"/><line x1="0.5" y1="8.00" x2="49.5" y2="8.00" stroke="#555" stroke-width="0.5"/><line x1="0.5" y1="11.75" x2="49.5" y2="11.75" stroke="#555" stroke-width="0.5"/><line x1="0.5" y1="15.50" x2="49.5" y2="15.50" stroke="#555" stroke-width="0.5"/><line x1="0.5" y1="19.25" x2="49.5" y2="19.25" stroke="#555" stroke-width="0.5"/><line x1="0.5" y1="23.00" x2="49.5" y2="23.00" stroke="#555" stroke-width="0.5"/><line x1="0.5" y1="26.75" x2="49.5" y2="26.75" stroke="#555" stroke-width="0.5"/><rect x="1.90" y="1.70" width="1.2" height="1.1" fill="#777"/><rect x="1.90" y="9.20" width="1.2" height="1.1" fill="#777"/><rect x="1.90" y="16.70" width="1.2" height="1.1" fill="#777"/><rect x="1.90" y="20.45" width="1.2" height="1.1" fill="#777"/><rect x="1.90" y="27.95" width="1.2" height="1.1" fill="#777"/><rect x="6.35" y="1.70" width="1.2" height="1.1" fill="#777"/><rect x="6.35" y="5.45" width="1.2" height="1.1" fill="#777"/><rect x="6.35" y="12.95" width="1.2" height="1.1" fill="#777"/><rect x="6.35" y="20.45" width="1.2" height="1.1" fill="#777"/><rect x="6.35" y="24.20" width="1.2" height="1.1" fill="#777"/><rect x="10.80" y="5.45" width="1.2" height="1.1" fill="#777"/><rect x="10.80" y="9.20" width="1.2" height="1.1" fill="#777"/><rect x="10.80" y="16.70" width="1.2" height="1.1" fill="#777"/><rect x="10.80" y="24.20" width="1.2" height="1.1" fill="#777"/><rect x="10.80" y="27.95" width="1.2" height="1.1" fill="#777"/><rect x="15.25" y="1.70" width="1.2" height="1.1" fill="#777"/><rect x="15.25" y="9.20" width="1.2" height="1.1" fill="#777"/><rect x="15.25" y="12.95" width="1.2" height="1.1" fill="#777"/><rect x="15.25" y="20.45" width="1.2" height="1.1" fill="#777"/><rect x="15.25" y="27.95" width="1.2" height="1.1" fill="#777"/><rect x="19.70" y="5.45" width="1.2" height="1.1" fill="#777"/><rect x="19.70" y="12.95" width="1.2" height="1.1" fill="#777"/><rect x="19.70" y="16.70" width="1.2" height="1.1" fill="#777"/><rect x="19.70" y="24.20" width="1.2" height="1.1" fill="#777"/><rect x="24.15" y="1.70" width="1.2" height="1.1" fill="#777"/><rect x="24.15" y="9.20" width="1.2" height="1.1" fill="#777"/><rect x="24.15" y="16.70" width="1.2" height="1.1" fill="#777"/><rect x="24.15" y="20.45" width="1.2" height="1.1" fill="#777"/><rect x="24.15" y="27.95" width="1.2" height="1.1" fill="#777"/><rect x="28.60" y="1.70" width="1.2" height="1.1" fill="#777"/><rect x="28.60" y="5.45" width="1.2" height="1.1" fill="#777"/><rect x="28.60" y="12.95" width="1.2" height="1.1" fill="#777"/><rect x="28.60" y="20.45" width="1.2" height="1.1" fill="#777"/><rect x="28.60" y="24.20" width="1.2" height="1.1" fill="#777"/><rect x="33.05" y="5.45" width="1.2" height="1.1" fill="#777"/><rect x="33.05" y="9.20" width="1.2" height="1.1" fill="#777"/><rect x="33.05" y="16.70" width="1.2" height="1.1" fill="#777"/><rect x="33.05" y="24.20" width="1.2" height="1.1" fill="#777"/><rect x="33.05" y="27.95" width="1.2" height="1.1" fill="#777"/><rect x="37.50" y="1.70" width="1.2" height="1.1" fill="#777"/><rect x="37.50" y="9.20" width="1.2" height="1.1" fill="#777"/><rect x="37.50" y="12.95" width="1.2" height="1.1" fill="#777"/><rect x="37.50" y="20.45" width="1.2" height="1.1" fill="#777"/><rect x="37.50" y="27.95" width="1.2" height="1.1" fill="#777"/><rect x="41.95" y="5.45" width="1.2" height="1.1" fill="#777"/><rect x="41.95" y="12.95" width="1.2" height="1.1" fill="#777"/><rect x="41.95" y="16.70" width="1.2" height="1.1" fill="#777"/><rect x="41.95" y="24.20" width="1.2" height="1.1" fill="#777"/><rect x="46.40" y="1.70" width="1.2" height="1.1" fill="#777"/><rect x="46.40" y="9.20" width="1.2" height="1.1" fill="#777"/><rect x="46.40" y="16.70" width="1.2" height="1.1" fill="#777"/><rect x="46.40" y="20.45" width="1.2" height="1.1" fill="#777"/><rect x="46.40" y="27.95" width="1.2" height="1.1" fill="#777"/></svg>
<div style="left:681px;top:226px;width:4px;height:0.7px;background:#666;"></div>
<svg style="left:662px;top:231px" width="43" height="29" viewBox="0 0 43 29">
<rect width="43" height="29" fill="#f6f6f6"/>
<polygon points="0,0 17,0 14,4 19,9 20,14 8,16 6,8 0,7" fill="#141414"/>
<polygon points="6,8 14,5 19,10 19,14 9,15" fill="#3c3c3c"/>
<polygon points="22,0 35,0 38,3 30,6 25,5" fill="#0e0e0e"/>
<polygon points="37,0 43,0 43,3 40,2" fill="#1c1c1c"/>
<polygon points="0,16 20,15 43,13 43,16 22,18 0,19" fill="#4a4a4a"/>
<polygon points="0,19 10,18 16,20 9,26 0,29" fill="#101010"/>
<polygon points="0,29 9,26 18,21 24,29" fill="#6a6a6a"/>
<polygon points="24,18 28,18 26,29 20,29 23,22" fill="#1a1a1a"/>
<polygon points="29,18 43,17 43,29 34,29" fill="#0c0c0c"/>
<polygon points="33,29 43,20 43,22 36,29" fill="#f4f4f4"/>
<polygon points="2,20 6,20 3,24" fill="#e8e8e8"/>
</svg>
<div style="left:681px;top:261.2px;width:4px;height:0.7px;background:#666;"></div>
<svg style="left:661px;top:266px" width="47" height="28" viewBox="0 0 47 28"><rect width="47" height="27.5" fill="#d8d8d8"/><rect x="0" y="0.4" width="47" height="3.2" fill="#4a4a4a"/><rect x="0" y="3.6" width="47" height="0.9" fill="#1e1e1e"/><rect x="4.7" y="0.9" width="2.6" height="2.3" fill="#b8b8b8"/><rect x="8.6" y="0.9" width="2.6" height="2.3" fill="#b8b8b8"/><rect x="16.4" y="0.9" width="2.6" height="2.3" fill="#b8b8b8"/><rect x="20.3" y="0.9" width="2.6" height="2.3" fill="#b8b8b8"/><rect x="28.1" y="0.9" width="2.6" height="2.3" fill="#b8b8b8"/><rect x="32.0" y="0.9" width="2.6" height="2.3" fill="#b8b8b8"/><rect x="39.8" y="0.9" width="2.6" height="2.3" fill="#b8b8b8"/><rect x="43.7" y="0.9" width="2.6" height="2.3" fill="#b8b8b8"/><rect x="0" y="5.9" width="47" height="3.2" fill="#4a4a4a"/><rect x="0" y="9.100000000000001" width="47" height="0.9" fill="#1e1e1e"/><rect x="0.8" y="6.4" width="2.6" height="2.3" fill="#b8b8b8"/><rect x="4.7" y="6.4" width="2.6" height="2.3" fill="#b8b8b8"/><rect x="12.5" y="6.4" width="2.6" height="2.3" fill="#b8b8b8"/><rect x="16.4" y="6.4" width="2.6" height="2.3" fill="#b8b8b8"/><rect x="24.2" y="6.4" width="2.6" height="2.3" fill="#b8b8b8"/><rect x="28.1" y="6.4" width="2.6" height="2.3" fill="#b8b8b8"/><rect x="35.9" y="6.4" width="2.6" height="2.3" fill="#b8b8b8"/><rect x="39.8" y="6.4" width="2.6" height="2.3" fill="#b8b8b8"/><rect x="0" y="11.4" width="47" height="3.2" fill="#4a4a4a"/><rect x="0" y="14.600000000000001" width="47" height="0.9" fill="#1e1e1e"/><rect x="0.8" y="11.9" width="2.6" height="2.3" fill="#b8b8b8"/><rect x="8.6" y="11.9" width="2.6" height="2.3" fill="#b8b8b8"/><rect x="12.5" y="11.9" width="2.6" height="2.3" fill="#b8b8b8"/><rect x="20.3" y="11.9" width="2.6" height="2.3" fill="#b8b8b8"/><rect x="24.2" y="11.9" width="2.6" height="2.3" fill="#b8b8b8"/><rect x="32.0" y="11.9" width="2.6" height="2.3" fill="#b8b8b8"/><rect x="35.9" y="11.9" width="2.6" height="2.3" fill="#b8b8b8"/><rect x="43.7" y="11.9" width="2.6" height="2.3" fill="#b8b8b8"/><rect x="0" y="16.9" width="47" height="3.2" fill="#4a4a4a"/><rect x="0" y="20.099999999999998" width="47" height="0.9" fill="#1e1e1e"/><rect x="4.7" y="17.4" width="2.6" height="2.3" fill="#b8b8b8"/><rect x="8.6" y="17.4" width="2.6" height="2.3" fill="#b8b8b8"/><rect x="16.4" y="17.4" width="2.6" height="2.3" fill="#b8b8b8"/><rect x="20.3" y="17.4" width="2.6" height="2.3" fill="#b8b8b8"/><rect x="28.1" y="17.4" width="2.6" height="2.3" fill="#b8b8b8"/><rect x="32.0" y="17.4" width="2.6" height="2.3" fill="#b8b8b8"/><rect x="39.8" y="17.4" width="2.6" height="2.3" fill="#b8b8b8"/><rect x="43.7" y="17.4" width="2.6" height="2.3" fill="#b8b8b8"/><rect x="0" y="22.4" width="47" height="3.2" fill="#4a4a4a"/><rect x="0" y="25.599999999999998" width="47" height="0.9" fill="#1e1e1e"/><rect x="0.8" y="22.9" width="2.6" height="2.3" fill="#b8b8b8"/><rect x="4.7" y="22.9" width="2.6" height="2.3" fill="#b8b8b8"/><rect x="12.5" y="22.9" width="2.6" height="2.3" fill="#b8b8b8"/><rect x="16.4" y="22.9" width="2.6" height="2.3" fill="#b8b8b8"/><rect x="24.2" y="22.9" width="2.6" height="2.3" fill="#b8b8b8"/><rect x="28.1" y="22.9" width="2.6" height="2.3" fill="#b8b8b8"/><rect x="35.9" y="22.9" width="2.6" height="2.3" fill="#b8b8b8"/><rect x="39.8" y="22.9" width="2.6" height="2.3" fill="#b8b8b8"/><rect x="5.5" y="0" width="0.8" height="27.5" fill="#1a1a1a"/><rect x="9.4" y="0" width="0.8" height="27.5" fill="#1a1a1a"/><rect x="14.9" y="0" width="0.8" height="27.5" fill="#1a1a1a"/><rect x="18.8" y="0" width="0.8" height="27.5" fill="#1a1a1a"/><rect x="24.3" y="0" width="0.8" height="27.5" fill="#1a1a1a"/><rect x="28.2" y="0" width="0.8" height="27.5" fill="#1a1a1a"/><rect x="33.7" y="0" width="0.8" height="27.5" fill="#1a1a1a"/><rect x="37.6" y="0" width="0.8" height="27.5" fill="#1a1a1a"/><rect x="43.1" y="0" width="0.8" height="27.5" fill="#1a1a1a"/><rect x="0" y="0.4" width="3.0" height="4.4" fill="#050505"/><rect x="36" y="22" width="11" height="5.5" fill="#050505"/></svg>
<div style="left:682px;top:296.6px;width:4px;height:0.7px;background:#666;"></div>
<svg style="left:662px;top:298px" width="46" height="33" viewBox="0 0 46 33">
<defs><pattern id="hh" width="1.6" height="1.6" patternUnits="userSpaceOnUse" patternTransform="rotate(35)"><rect width="1.6" height="1.6" fill="#bdbdbd"/><rect width="0.9" height="1.6" fill="#2a2a2a"/></pattern></defs>
<polygon points="2,10 8,9 12,13 22,9 34,4 40,2 43,4 36,9 35,16 28,22 22,27 12,22 5,21 2,16" fill="url(#hh)"/>
<polygon points="2,10 7,10 8,17 4,18" fill="#1c1c1c"/>
<polygon points="33,4 41,2 43,4 37,7" fill="#1a1a1a"/>
<polygon points="18,21 26,19 27,24 21,27" fill="#151515"/>
<polygon points="6,27 40,19 42,21 8,30" fill="#8a8a8a"/>
<polygon points="8,28 20,25 21,27 10,31" fill="#2b2b2b"/>
<polygon points="33,24 41,20 43,23 36,28" fill="#5a5a5a"/>
<path d="M36 10 L43 12 M37 12 L42 14" stroke="#333" stroke-width="0.7"/>
</svg>
<div style="left:682px;top:330.0px;width:4px;height:0.7px;background:#666;"></div>
<div class="pg" style="left:809.2px;top:194.42px;width:100.8px;height:19.3px;font-family:'Liberation Serif', serif;font-size:3.25px;line-height:3.76px;color:#0c0c0c;white-space:nowrap;"><div style="left:0.0px;top:0.00px;width:100.8px;height:3.76px;text-align-last:justify;">Gutenberg als ein Individuum gesehen, das, von einem Genius zu erwachen</div><div style="left:0.0px;top:3.76px;width:100.8px;height:3.76px;text-align-last:justify;">inspiriert, seinen genialen Gedanken verwirklichte. Der solcher Literatur sei</div><div style="left:0.0px;top:7.52px;width:100.8px;height:3.76px;text-align-last:justify;">nur an einem Beispiel exemplarisch aufgezeigt. Eine neuere Literatur sieht in</div><div style="left:0.0px;top:11.28px;width:100.8px;height:3.76px;text-align-last:justify;">der die technischen Voraussetzungen gegeben waren und man mehr das das</div><div style="left:0.0px;top:15.04px;width:84.7px;height:3.76px;text-align-last:justify;">die bereits vorhandenen Techniken weiterentwickelte und zu die</div></div>
<div class="pg" style="left:809.2px;top:213.48px;width:100.8px;height:15.82px;font-family:'Liberation Serif', serif;font-size:3.25px;line-height:3.83px;color:#0c0c0c;white-space:nowrap;"><div style="left:5.7px;top:0.00px;width:95.1px;height:3.83px;text-align-last:justify;">Erfindung Gutenbergs näher, so erkennt man, daß diese sich im Grunde</div><div style="left:0.0px;top:3.83px;width:100.8px;height:3.83px;text-align-last:justify;">aus drei einzelnen Komponenten zusammensetzt. Zum einen ist dies die des</div><div style="left:0.0px;top:7.66px;width:100.8px;height:3.83px;text-align-last:justify;">Handgießinstruments zu nennen, mit dessen Hilfe gleiche Lettern, die für in</div><div style="left:0.0px;top:11.49px;width:35.3px;height:3.83px;text-align-last:justify;">nahezu beliebiger Anzahl</div></div>
<div class="pg" style="left:809.2px;top:228.81px;width:100.8px;height:15.58px;font-family:'Liberation Serif', serif;font-size:3.25px;line-height:3.77px;color:#0c0c0c;white-space:nowrap;"><div style="left:5.7px;top:0.00px;width:95.1px;height:3.77px;text-align-last:justify;">gegossen werden konnten. Zum anderen ist die Idee zu würdigen, aus</div><div style="left:0.0px;top:3.77px;width:100.8px;height:3.77px;text-align-last:justify;">diesen einzelnen Elementen ein Ganzes, d.h. aus den einzelnen Zeichen Text</div><div style="left:0.0px;top:7.54px;width:100.8px;height:3.77px;text-align-last:justify;">über Satz zusammenzustellen. Als drittes Element kommt die Nutzung der</div><div style="left:0.0px;top:11.31px;width:86.7px;height:3.77px;text-align-last:justify;">Druckerpresse hinzu. Mit der Erfindung des Buchdrucks mit als</div></div>
<div class="pg" style="left:809.2px;top:255.32px;width:50.3px;height:4.15px;font-family:'Liberation Serif', serif;font-size:3.35px;line-height:4.15px;color:#0c0c0c;white-space:nowrap;text-align:left;text-align-last:justify;">3.2.1 Die Technik des Handsatzes</div>
<div class="pg" style="left:809.2px;top:265.0px;width:48.8px;height:4.0px;font-family:'Liberation Serif', serif;font-size:3.2px;line-height:4.0px;color:#0c0c0c;white-space:nowrap;text-align:left;text-align-last:justify;font-style:italic;">3.2.1.1 Das Handgießinstrument</div>
<div class="pg" style="left:809.2px;top:270.61px;width:100.8px;height:23.18px;font-family:'Liberation Serif', serif;font-size:3.25px;line-height:3.78px;color:#0c0c0c;white-space:nowrap;"><div style="left:5.7px;top:0.00px;width:95.1px;height:3.78px;text-align-last:justify;">Johannes Gutenberg, begann das Zeitalter der Buchdruckerkunst. Diese</div><div style="left:0.0px;top:3.78px;width:100.8px;height:3.78px;text-align-last:justify;">Kunst, gleich welcher Technik sie sich bediente, ist von ihren Anfängen an</div><div style="left:0.0px;top:7.56px;width:100.8px;height:3.78px;text-align-last:justify;">bis heute vom Hauptwerkzeug der Massenverbreitung geworden. Dies gilt</div><div style="left:0.0px;top:11.34px;width:100.8px;height:3.78px;text-align-last:justify;">sowohl für den technischen, den politischen als auch den sozialkulturellen ist</div><div style="left:0.0px;top:15.12px;width:100.8px;height:3.78px;text-align-last:justify;">zu einem integralen Bestandteil unserer Kulturgeschichte geworden. Ein der</div><div style="left:0.0px;top:18.90px;width:22.2px;height:3.78px;text-align-last:justify;">Literatur, die mit</div></div>
<div class="pg" style="left:809.2px;top:293.3px;width:100.8px;height:38.5px;font-family:'Liberation Serif', serif;font-size:3.25px;line-height:3.8px;color:#0c0c0c;white-space:nowrap;"><div style="left:5.7px;top:0.00px;width:95.1px;height:3.8px;text-align-last:justify;">der Leistung Gutenbergs beschäftigt, versucht diese zu personifizieren.</div><div style="left:0.0px;top:3.80px;width:100.8px;height:3.8px;text-align-last:justify;">Dabei wird Gutenberg als ein Individuum gesehen, das, von einem Genius zu</div><div style="left:0.0px;top:7.60px;width:100.8px;height:3.8px;text-align-last:justify;">erwachen inspiriert, seinen genialen Gedanken verwirklichte. Der solcher sei</div><div style="left:0.0px;top:11.40px;width:100.8px;height:3.8px;text-align-last:justify;">nur an einem Beispiel exemplarisch aufgezeigt. Eine neuere Literatur sieht in</div><div style="left:0.0px;top:15.20px;width:100.8px;height:3.8px;text-align-last:justify;">der die technischen Voraussetzungen gegeben waren und man mehr das das</div><div style="left:0.0px;top:19.00px;width:100.8px;height:3.8px;text-align-last:justify;">die bereits vorhandenen Techniken weiterentwickelte und zu einer neuen die</div><div style="left:0.0px;top:22.80px;width:100.8px;height:3.8px;text-align-last:justify;">Erfindung Gutenbergs näher, so erkennt man, daß diese sich im Grunde aus</div><div style="left:0.0px;top:26.60px;width:100.8px;height:3.8px;text-align-last:justify;">drei einzelnen Komponenten zusammensetzt. Zum einen ist dies die des zu</div><div style="left:0.0px;top:30.40px;width:100.8px;height:3.8px;text-align-last:justify;">nennen, mit dessen Hilfe gleiche Lettern, die für den späteren Satz benötigt</div><div style="left:0.0px;top:34.20px;width:100.8px;height:3.8px;text-align-last:justify;">wurden, in nahezu beliebiger Anzahl gegossen werden konnten. Zum ist die</div></div>
<div style="left:809.2px;top:333px;width:21px;height:1px;background:#6a6a6a;"></div>
<div class="pg" style="left:809.2px;top:336.25px;width:100.8px;height:3.4px;font-family:'Liberation Serif', serif;font-size:2.3px;line-height:2.9px;color:#101010;white-space:nowrap;-webkit-text-stroke:0.12px #101010;"><div style="left:0.0px;top:0.00px;width:90.7px;height:2.9px;text-align-last:justify;">Idee zu würdigen, aus diesen einzelnen Elementen ein Ganzes, d.h. aus den einzelnen Zeichen Als</div></div>
<div class="pg" style="left:809.2px;top:339.55px;width:100.8px;height:5.9px;font-family:'Liberation Serif', serif;font-size:2.3px;line-height:2.7px;color:#101010;white-space:nowrap;-webkit-text-stroke:0.12px #101010;"><div style="left:0.0px;top:0.00px;width:100.8px;height:2.7px;text-align-last:justify;">drittes Element kommt die Nutzung der Druckerpresse hinzu. Mit der Erfindung des Buchdrucks mit Lettern</div><div style="left:0.0px;top:2.70px;width:18.1px;height:2.7px;text-align-last:justify;">durch Johannes als</div></div>
<div class="pg" style="left:1011.5px;top:194.59px;width:45.2px;height:27.24px;font-family:'Liberation Serif', serif;font-size:3.25px;line-height:3.82px;color:#0c0c0c;white-space:nowrap;"><div style="left:5.7px;top:0.00px;width:39.5px;height:3.82px;text-align-last:justify;">Johannes Gutenberg, begann</div><div style="left:0.0px;top:3.82px;width:45.2px;height:3.82px;text-align-last:justify;">das Zeitalter der Diese Kunst, sie</div><div style="left:0.0px;top:7.64px;width:45.2px;height:3.82px;text-align-last:justify;">sich bediente, ist von ihren an bis</div><div style="left:0.0px;top:11.46px;width:45.2px;height:3.82px;text-align-last:justify;">heute vom Hauptwerkzeug der gilt</div><div style="left:0.0px;top:15.28px;width:45.2px;height:3.82px;text-align-last:justify;">sowohl für den technischen, den</div><div style="left:0.0px;top:19.10px;width:45.2px;height:3.82px;text-align-last:justify;">politischen als auch den Bereich.</div><div style="left:0.0px;top:22.92px;width:34.4px;height:3.82px;text-align-last:justify;">Die Typographie ist zu</div></div>
<div class="pg" style="left:1020.2px;top:222.42px;width:36.5px;height:14.25px;font-family:'Liberation Serif', serif;font-size:2.45px;line-height:2.75px;color:#0c0c0c;white-space:nowrap;-webkit-text-stroke:0.1px #0c0c0c;"><div style="left:4.0px;top:0.00px;width:32.5px;height:2.75px;text-align-last:justify;">einem integralen Bestandteil Ein</div><div style="left:0.0px;top:2.75px;width:36.5px;height:2.75px;text-align-last:justify;">Großteil der Literatur, die sich mit</div><div style="left:0.0px;top:5.50px;width:36.5px;height:2.75px;text-align-last:justify;">der Leistung Gutenbergs beschäftigt,</div><div style="left:0.0px;top:8.25px;width:36.5px;height:2.75px;text-align-last:justify;">versucht diese zu personifizieren. als</div><div style="left:0.0px;top:11.00px;width:29.2px;height:2.75px;text-align-last:justify;">ein Individuum gesehen, das,</div></div>
<div class="pg" style="left:1011.5px;top:237.7px;width:45.2px;height:11.9px;font-family:'Liberation Serif', serif;font-size:3.25px;line-height:3.8px;color:#0c0c0c;white-space:nowrap;"><div style="left:5.7px;top:0.00px;width:39.5px;height:3.8px;text-align-last:justify;">von einem Genius zu seinen</div><div style="left:0.0px;top:3.80px;width:45.2px;height:3.8px;text-align-last:justify;">genialen Gedanken verwirklichte.</div><div style="left:0.0px;top:7.60px;width:27.1px;height:3.8px;text-align-last:justify;">Der solcher oftmals</div></div>
<div class="pg" style="left:1020.2px;top:249.62px;width:36.5px;height:19.82px;font-family:'Liberation Serif', serif;font-size:2.45px;line-height:2.76px;color:#0c0c0c;white-space:nowrap;-webkit-text-stroke:0.12px #0c0c0c;"><div style="left:4.0px;top:0.00px;width:32.5px;height:2.76px;text-align-last:justify;">anhaftende Pathos sei nur an die</div><div style="left:0.0px;top:2.76px;width:36.5px;height:2.76px;text-align-last:justify;">Erfindung Gutenbergs vor dem Zeit,</div><div style="left:0.0px;top:5.52px;width:36.5px;height:2.76px;text-align-last:justify;">in der die technischen gegeben und</div><div style="left:0.0px;top:8.28px;width:36.5px;height:2.76px;text-align-last:justify;">man mehr das Genie bedurfte, das zu</div><div style="left:0.0px;top:11.04px;width:36.5px;height:2.76px;text-align-last:justify;">einer neuen Technologie Betrachtet</div><div style="left:0.0px;top:13.80px;width:36.5px;height:2.76px;text-align-last:justify;">man die Erfindung Gutenbergs so im</div><div style="left:0.0px;top:16.56px;width:23.7px;height:2.76px;text-align-last:justify;">Grunde aus drei Zum</div></div>
<div class="pg" style="left:1011.5px;top:270.59px;width:45.2px;height:38.7px;font-family:'Liberation Serif', serif;font-size:3.25px;line-height:3.82px;color:#0c0c0c;white-space:nowrap;"><div style="left:5.7px;top:0.00px;width:39.5px;height:3.82px;text-align-last:justify;">einen ist dies die Erfindung</div><div style="left:0.0px;top:3.82px;width:45.2px;height:3.82px;text-align-last:justify;">des Handgießinstruments zu mit</div><div style="left:0.0px;top:7.64px;width:45.2px;height:3.82px;text-align-last:justify;">dessen Hilfe gleiche Lettern, die</div><div style="left:0.0px;top:11.46px;width:45.2px;height:3.82px;text-align-last:justify;">für den späteren Satz benötigt in</div><div style="left:0.0px;top:15.28px;width:45.2px;height:3.82px;text-align-last:justify;">nahezu beliebiger Anzahl werden</div><div style="left:0.0px;top:19.10px;width:45.2px;height:3.82px;text-align-last:justify;">konnten. Zum anderen ist die Idee</div><div style="left:0.0px;top:22.92px;width:45.2px;height:3.82px;text-align-last:justify;">zu würdigen, aus diesen einzelnen</div><div style="left:0.0px;top:26.74px;width:45.2px;height:3.82px;text-align-last:justify;">Elementen ein Ganzes, d.h. aus</div><div style="left:0.0px;top:30.56px;width:45.2px;height:3.82px;text-align-last:justify;">den einzelnen Zeichen einen Text</div><div style="left:0.0px;top:34.38px;width:45.2px;height:3.82px;text-align-last:justify;">über Satz zusammenzustellen. Als</div></div>
<div class="pg" style="left:1011.5px;top:308.65px;width:100.6px;height:7.9px;font-family:'Liberation Serif', serif;font-size:3.25px;line-height:3.7px;color:#0c0c0c;white-space:nowrap;"><div style="left:0.0px;top:0.00px;width:100.6px;height:3.7px;text-align-last:justify;">drittes Element kommt die Nutzung der Druckerpresse hinzu. Mit der des</div><div style="left:0.0px;top:3.70px;width:65.4px;height:3.7px;text-align-last:justify;">Buchdrucks mit beweglichen Lettern durch besser</div></div>
<div class="pg" style="left:1011.5px;top:316.34px;width:100.6px;height:11.66px;font-family:'Liberation Serif', serif;font-size:3.25px;line-height:3.72px;color:#0c0c0c;white-space:nowrap;"><div style="left:5.7px;top:0.00px;width:94.9px;height:3.72px;text-align-last:justify;">bekannt als Johannes Gutenberg, begann das Zeitalter der Diese Kunst,</div><div style="left:0.0px;top:3.72px;width:100.6px;height:3.72px;text-align-last:justify;">gleich welcher Technik sie sich bediente, ist von ihren Anfängen an bis heute</div><div style="left:0.0px;top:7.44px;width:100.6px;height:3.72px;text-align-last:justify;">vom Hauptwerkzeug der Massenverbreitung geworden. Dies gilt sowohl für</div></div>
<div style="left:1011.5px;top:331px;width:21px;height:1px;background:#6a6a6a;"></div>
<div class="pg" style="left:1011.5px;top:334.3px;width:100px;height:5.7px;font-family:'Liberation Serif', serif;font-size:2.3px;line-height:2.6px;color:#101010;white-space:nowrap;-webkit-text-stroke:0.12px #101010;"><div style="left:0.0px;top:0.00px;width:100.0px;height:2.6px;text-align-last:justify;">den technischen, den politischen als auch den sozialkulturellen Bereich. Die Typographie ist zu einem Ein</div><div style="left:0.0px;top:2.60px;width:38.0px;height:2.6px;text-align-last:justify;">Großteil der Literatur, die sich mit der zu</div></div>
<div class="pg" style="left:1011.5px;top:340.25px;width:100px;height:5.9px;font-family:'Liberation Serif', serif;font-size:2.3px;line-height:2.7px;color:#101010;white-space:nowrap;-webkit-text-stroke:0.12px #101010;"><div style="left:0.0px;top:0.00px;width:100.0px;height:2.7px;text-align-last:justify;">personifizieren. Dabei wird Gutenberg als ein Individuum gesehen, das, von einem Genius zu erwachen Der</div><div style="left:0.0px;top:2.70px;width:10.0px;height:2.7px;text-align-last:justify;">solcher sei</div></div>
<div class="pg" style="left:1059.2px;top:252.82px;width:53.7px;height:18.42px;font-family:'Liberation Serif', serif;font-size:2.2px;line-height:2.56px;color:#0c0c0c;white-space:nowrap;-webkit-text-stroke:0.16px #0c0c0c;"><div style="left:0.0px;top:0.00px;width:53.7px;height:2.56px;text-align-last:justify;">nur an einem Beispiel exemplarisch aufgezeigt. Eine neuere</div><div style="left:0.0px;top:2.56px;width:53.7px;height:2.56px;text-align-last:justify;">Literatur sieht die Erfindung Gutenbergs vor dem seiner in</div><div style="left:0.0px;top:5.12px;width:53.7px;height:2.56px;text-align-last:justify;">der die technischen Voraussetzungen gegeben waren und das</div><div style="left:0.0px;top:7.68px;width:53.7px;height:2.56px;text-align-last:justify;">Genie bedurfte, das die bereits vorhandenen Techniken und</div><div style="left:0.0px;top:10.24px;width:53.7px;height:2.56px;text-align-last:justify;">zu einer neuen Technologie zusammenstellte. Betrachtet die</div><div style="left:0.0px;top:12.80px;width:53.7px;height:2.56px;text-align-last:justify;">Erfindung Gutenbergs näher, so erkennt man, daß diese sich</div><div style="left:0.0px;top:15.36px;width:24.2px;height:2.56px;text-align-last:justify;">im Grunde aus drei Zum</div></div>
<div class="pg" style="left:1059.2px;top:270.82px;width:53.7px;height:8.18px;font-family:'Liberation Serif', serif;font-size:2.2px;line-height:2.56px;color:#0c0c0c;white-space:nowrap;-webkit-text-stroke:0.16px #0c0c0c;"><div style="left:0.0px;top:0.00px;width:53.7px;height:2.56px;text-align-last:justify;">einen ist dies die Erfindung des Handgießinstruments zu mit</div><div style="left:0.0px;top:2.56px;width:53.7px;height:2.56px;text-align-last:justify;">dessen Hilfe gleiche Lettern, die für den späteren Satz in ist</div><div style="left:0.0px;top:5.12px;width:34.9px;height:2.56px;text-align-last:justify;">die Idee zu würdigen, aus diesen ein</div></div>
<div class="pg" style="left:1059.2px;top:278.55px;width:53.7px;height:23.0px;font-family:'Liberation Serif', serif;font-size:2.2px;line-height:2.5px;color:#0c0c0c;white-space:nowrap;-webkit-text-stroke:0.16px #0c0c0c;"><div style="left:0.0px;top:0.00px;width:53.7px;height:2.5px;text-align-last:justify;">Ganzes, d.h. aus den einzelnen Zeichen einen beliebigen Als</div><div style="left:0.0px;top:2.50px;width:53.7px;height:2.5px;text-align-last:justify;">drittes Element kommt die Nutzung der Druckerpresse Mit</div><div style="left:0.0px;top:5.00px;width:53.7px;height:2.5px;text-align-last:justify;">der Erfindung des Buchdrucks mit beweglichen Lettern als</div><div style="left:0.0px;top:7.50px;width:53.7px;height:2.5px;text-align-last:justify;">Johannes Gutenberg, begann das Zeitalter der Diese Kunst,</div><div style="left:0.0px;top:10.00px;width:53.7px;height:2.5px;text-align-last:justify;">gleich welcher Technik sie sich bediente, ist von ihren an bis</div><div style="left:0.0px;top:12.50px;width:53.7px;height:2.5px;text-align-last:justify;">heute vom Hauptwerkzeug der Massenverbreitung Dies gilt</div><div style="left:0.0px;top:15.00px;width:53.7px;height:2.5px;text-align-last:justify;">sowohl für den technischen, den politischen als auch den ist</div><div style="left:0.0px;top:17.50px;width:53.7px;height:2.5px;text-align-last:justify;">zu einem integralen Bestandteil unserer Kulturgeschichte die</div><div style="left:0.0px;top:20.00px;width:48.3px;height:2.5px;text-align-last:justify;">sich mit der Leistung Gutenbergs beschäftigt, versucht</div></div>
<svg style="left:1063px;top:195px" width="45" height="57" viewBox="0 0 45 57">
<defs><pattern id="ph" width="1.3" height="1.3" patternUnits="userSpaceOnUse" patternTransform="rotate(40)"><rect width="1.3" height="1.3" fill="#d2d2d2"/><rect width="0.6" height="1.3" fill="#3a3a3a"/></pattern>
<pattern id="ph2" width="1.5" height="1.5" patternUnits="userSpaceOnUse" patternTransform="rotate(-30)"><rect width="1.5" height="1.5" fill="#f0f0f0"/><rect width="0.5" height="1.5" fill="#555"/></pattern></defs>
<rect width="45" height="57" fill="url(#ph)"/>
<rect x="30" y="0" width="15" height="24" fill="#e6e6e6" opacity="0.75"/>
<path d="M14 9 C13 3 20 0 26 2 C32 3 33 8 31 11 C27 9 20 11 16 14 Z" fill="#161616"/>
<path d="M17 13 C19 10 27 9 30 12 L31 22 C29 27 22 28 19 24 Z" fill="#c9c9c9"/>
<path d="M18 14 C17 20 19 27 23 30 L27 33 C30 28 31 22 30 18 C27 20 22 19 20 14 Z" fill="#1e1e1e"/>
<path d="M22 17 L28 16 L28 18 Z" fill="#111"/>
<path d="M0 40 C4 30 12 27 19 25 L24 33 L30 27 C37 28 43 33 45 40 L45 57 L0 57 Z" fill="url(#ph2)"/>
<path d="M10 30 L18 26 L20 57 L9 57 Z" fill="#2a2a2a" opacity="0.85"/>
<path d="M30 28 L36 30 L38 57 L31 57 Z" fill="#303030" opacity="0.8"/>
<path d="M20 38 C24 34 30 35 31 40 L29 50 L21 52 Z" fill="#f2f2f2" stroke="#333" stroke-width="0.5"/>
<path d="M0 44 L9 40 L10 57 L0 57 Z" fill="#f4f4f4" stroke="#444" stroke-width="0.4"/>
<rect x="38" y="44" width="6" height="11" fill="#e8e8e8" stroke="#333" stroke-width="0.5"/>
<rect x="0" y="56" width="45" height="1" fill="#222"/>
</svg>
<div class="btn" style="left:621px;top:896px;width:190px;height:24px;border-radius:5px;"></div>
<span class="t" id="t58" style="left:621px;top:903.04px;font-size:11px;color:#ffffff;letter-spacing:-0.061px;width:190px;text-align:center;">Manual duplex (Autosort)</span>
<div class="btn" style="left:813px;top:896px;width:124px;height:24px;border-radius:5px;"></div>
<span class="t" id="t59" style="left:813px;top:903.04px;font-size:11px;color:#ffffff;width:124px;text-align:center;">clear</span>
<div class="btn" style="left:940px;top:896px;width:125px;height:24px;border-radius:5px;"></div>
<span class="t" id="t60" style="left:940px;top:903.04px;font-size:11px;color:#ffffff;width:125px;text-align:center;">load</span>
<div class="btn" style="left:1069px;top:896px;width:125px;height:24px;border-radius:5px;"></div>
<span class="t" id="t61" style="left:1069px;top:903.04px;font-size:11px;color:#ffffff;width:125px;text-align:center;">save</span>
</div>
</body></html>
